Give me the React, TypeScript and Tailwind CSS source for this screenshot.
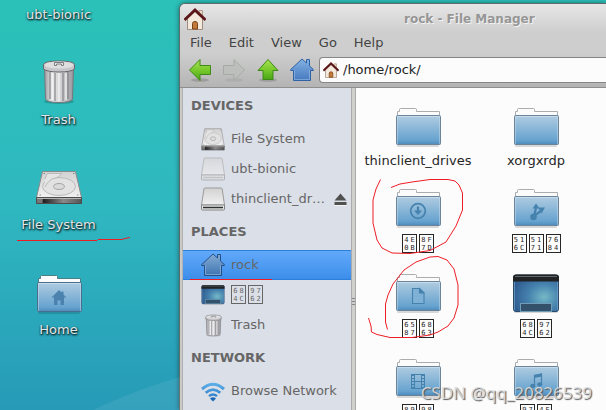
import type { ReactNode } from "react";

const SANS = "font-['DejaVu_Sans','Noto_Sans_CJK_SC',sans-serif]";

/* ---------- labels ---------- */

function HexGlyph({ code }: { code: string }) {
  return (
    <span className="flex h-[19px] w-[15px] flex-col items-center justify-center border border-current font-['DejaVu_Sans_Mono',monospace] text-[7px] leading-[8px]">
      <span className="flex gap-[2px]">
        <span>{code[0]}</span>
        <span>{code[1]}</span>
      </span>
      <span className="flex gap-[2px]">
        <span>{code[2]}</span>
        <span>{code[3]}</span>
      </span>
    </span>
  );
}

function HexLabel({ codes }: { codes: string[] }) {
  return (
    <span className="flex h-5 gap-[2px]">
      {codes.map((c) => (
        <HexGlyph key={c} code={c} />
      ))}
    </span>
  );
}

/* ---------- icons ---------- */

function Defs() {
  return (
    <svg className="absolute h-0 w-0" aria-hidden="true">
      <defs>
        <linearGradient id="folder" x1="0" y1="0" x2="0" y2="1">
          <stop offset="0" stopColor="#b0cce1" />
          <stop offset="0.85" stopColor="#67a3cf" />
          <stop offset="1" stopColor="#4d8abd" />
        </linearGradient>
        <linearGradient id="metal" x1="0" y1="0" x2="1" y2="0">
          <stop offset="0" stopColor="#9b9b9f" />
          <stop offset="0.25" stopColor="#e6e6e8" />
          <stop offset="0.6" stopColor="#cfcfd3" />
          <stop offset="1" stopColor="#96969c" />
        </linearGradient>
        <linearGradient id="disk" x1="0" y1="0" x2="0" y2="1">
          <stop offset="0" stopColor="#d2d2d2" />
          <stop offset="1" stopColor="#f0f0f0" />
        </linearGradient>
        <linearGradient id="dark" x1="0" y1="0" x2="1" y2="0">
          <stop offset="0" stopColor="#777" />
          <stop offset="0.13" stopColor="#777" />
          <stop offset="0.14" stopColor="#1c1c1c" />
          <stop offset="0.6" stopColor="#8a8a8a" />
          <stop offset="1" stopColor="#555" />
        </linearGradient>
        <linearGradient id="green" x1="0" y1="0" x2="0" y2="1">
          <stop offset="0" stopColor="#a9e253" />
          <stop offset="0.5" stopColor="#78c92c" />
          <stop offset="1" stopColor="#4aa518" />
        </linearGradient>
        <linearGradient id="blue" x1="0" y1="0" x2="0" y2="1">
          <stop offset="0" stopColor="#86b2e4" />
          <stop offset="1" stopColor="#4479be" />
        </linearGradient>
        <linearGradient id="steel" x1="0" y1="0" x2="0" y2="1">
          <stop offset="0" stopColor="#84acd4" />
          <stop offset="1" stopColor="#3f74b2" />
        </linearGradient>
        <radialGradient id="screen" cx="0.68" cy="0.6" r="0.7">
          <stop offset="0" stopColor="#74b9c6" />
          <stop offset="0.5" stopColor="#4682ae" />
          <stop offset="1" stopColor="#2f5d92" />
        </radialGradient>
        <linearGradient id="wifi" x1="0" y1="0" x2="0" y2="24" gradientUnits="userSpaceOnUse">
          <stop offset="0" stopColor="#6cc0f4" />
          <stop offset="1" stopColor="#1b68b8" />
        </linearGradient>
      </defs>
    </svg>
  );
}

function Folder({ emblem, low = false }: { emblem?: ReactNode; low?: boolean }) {
  return (
    <svg viewBox={low ? "0 -3 48 48" : "0 0 48 48"} className="size-12" aria-hidden="true">
      <rect x="3" y="41" width="42" height="2" rx="1" fill="#000" opacity="0.14" />
      <path
        d="M3.500 13V7.500H5.500V5.500Q5.500 4.500 6.500 4.500H21.500Q22.500 4.500 22.500 5.500V7.500H45.500V13Z"
        fill="#fbfbfb"
        stroke={low ? "#4a7f88" : "#aaacae"}
      />
      <rect x="2.500" y="11.500" width="44" height="29" rx="1" fill="url(#folder)" stroke={low ? "#48708c" : "#6c849a"} />
      <path d="M3.500 12.500H45.500" stroke="#e2eef7" opacity="0.5" />
      <path d="M3.500 13V40M45.500 13V40" stroke="#d4e6f4" opacity="0.4" />
      {emblem}
    </svg>
  );
}

const downloadEmblem = (
  <g fill="none" stroke="#4682ae" strokeWidth="1.700">
    <circle cx="24" cy="26" r="7.300" />
    <path d="M24 21.500V26.500" strokeWidth="2.200" />
    <path d="M20 25.500H28L24 30Z" fill="#4682ae" stroke="none" />
  </g>
);

const shareEmblem = (
  <g fill="#4682ae" stroke="#4682ae">
    <circle cx="21.500" cy="32" r="3.300" stroke="none" />
    <path d="M22 31L24 23M22.500 30.500L29 26" strokeWidth="2.200" />
    <path d="M20.500 23.500L24 18.500L27.500 23.500ZM26 22.500L33 22.500L29.500 28.500Z" stroke="none" />
  </g>
);

const documentEmblem = (
  <g fill="#7fb0d6" stroke="#4682ae" strokeWidth="1.100">
    <path d="M18.500 18.500H25.500L30 23V33.500H18.500Z" />
    <path d="M25.500 18.500V23H30Z" fill="#4682ae" />
  </g>
);

const videoEmblem = (
  <g fill="none" stroke="#4682ae">
    <rect x="17.500" y="19.500" width="13" height="14" />
    <path d="M20.500 19.500V33.500M27.500 19.500V33.500M20.500 26.500H27.500" />
    <path d="M19 20V33M29 20V33" strokeWidth="2" strokeDasharray="1 2" />
  </g>
);

const musicEmblem = (
  <g fill="#4682ae" stroke="#4682ae">
    <path d="M22.500 31V20.500L29.500 19V29.500" fill="none" strokeWidth="1.200" />
    <path d="M22 20L30 18.500V21.500L22 23Z" stroke="none" />
    <ellipse cx="20.700" cy="31" rx="2.200" ry="1.700" />
    <ellipse cx="27.700" cy="29.500" rx="2.200" ry="1.700" />
  </g>
);

const homeEmblem = (
  <path
    d="M24 19L16.500 26.500H19V34H22.500V29.500H25.500V34H29V26.500H31.500L28.500 23.500V20.500H26.500V21.500Z"
    fill="#4b82ae"
  />
);

function DesktopIcon({ className }: { className: string }) {
  return (
    <svg viewBox="0 0 48 40" className={className} aria-hidden="true">
      <rect x="2" y="36" width="44" height="3" rx="1.500" fill="#000" opacity="0.15" />
      <rect x="1.500" y="1" width="45" height="36.500" rx="2.500" fill="url(#screen)" stroke="#2c4a6c" />
      <path d="M1 7.500V3.500Q1 0.500 4 0.500H44Q47 0.500 47 3.500V7.500Z" fill="#202224" />
      <path d="M3 2.500H45" stroke="#64686c" />
      <path d="M2.500 8V36M45.500 8V36" stroke="#73a2c6" opacity="0.7" />
      <rect x="8.500" y="29.500" width="31" height="8" fill="#33516b" stroke="#6f9cb6" />
    </svg>
  );
}

function Trash({ className }: { className: string }) {
  return (
    <svg viewBox="0 0 34 46" className={className} aria-hidden="true">
      <ellipse cx="17" cy="42.500" rx="15" ry="2.500" fill="#000" opacity="0.18" />
      <path d="M2.500 8L3.500 40Q5 43.500 17 43.500Q29 43.500 30.500 40L31.500 8Z" fill="url(#metal)" stroke="#77777c" />
      <path d="M8 13V40M13 14V42M21 14V42M26 13V40" stroke="#77777c" strokeWidth="2" opacity="0.5" />
      <path d="M10.500 14V41M17 14V42.500M24 14V41" stroke="#f4f4f6" strokeWidth="1.600" opacity="0.8" />
      <path d="M1.500 6Q1.500 2 17 2Q32.500 2 32.500 6V10Q29 13 17 13Q5 13 1.500 10Z" fill="#c7c7cb" stroke="#67676b" />
      <ellipse cx="17" cy="6" rx="14.500" ry="3.500" fill="#dededf" />
      <path d="M12.500 6.500V3.500H21.500V6.500H19.500V5H14.500V6.500Z" fill="#ededed" stroke="#747478" strokeWidth="0.900" />
    </svg>
  );
}

function HardDisk({ className }: { className: string }) {
  return (
    <svg viewBox="0 0 48 36" preserveAspectRatio="none" className={className} aria-hidden="true">
      <path d="M7.500 2.500H40.500L46.500 28.500H1.500Z" fill="url(#disk)" stroke="#8a8a8a" />
      <path d="M1.500 28.500H46.500V34.500H1.500Z" fill="url(#dark)" stroke="#4c4c4c" />
      <path d="M2 29.500H46" stroke="#b5b5b5" />
      <ellipse cx="24" cy="17.500" rx="16.500" ry="9" fill="#e2e2e2" stroke="#bababa" />
      <path d="M10 10L12 4.500H27Q24 9 17 10Q12 13 10 18" fill="#e4e4e4" stroke="#bababa" />
      <ellipse cx="24" cy="17.500" rx="5.500" ry="3" fill="#dadada" stroke="#a4a4a4" />
      <path d="M8.500 4.500H10M38 4.500H39.500M4.500 26H6M42 26H43.500" stroke="#8a8a8a" />
    </svg>
  );
}

function Drive({ faded = false }: { faded?: boolean }) {
  return (
    <svg viewBox="0 0 24 24" className={faded ? "size-6 opacity-50" : "size-6"} aria-hidden="true">
      <path d="M3 1.500Q3 1 4 1H20Q21 1 21.200 2L23.500 18H0.500Z" fill="url(#disk)" stroke="#9b9b9b" />
      <path d="M0.500 18H23.500V22Q23.500 23 22.500 23H1.500Q0.500 23 0.500 22Z" fill="#e6e6e6" stroke="#858585" />
      <path d="M2 20.500H22" stroke={faded ? "#a5aaa8" : "#2d3230"} strokeWidth="1.500" />
    </svg>
  );
}

function Arrow({ turn, muted = false }: { turn: "left" | "right" | "up"; muted?: boolean }) {
  const d = {
    left: "M1.500 12L12 1.500V7.500H22.500V16.500H12V22.500Z",
    right: "M22.500 12L12 1.500V7.500H1.500V16.500H12V22.500Z",
    up: "M12 1.500L22 12.500H17V21.500H7V12.500H2Z",
  }[turn];
  return (
    <svg viewBox="0 0 24 24" className="size-6" aria-hidden="true">
      <ellipse cx="12" cy="22" rx="9" ry="1.800" fill="#000" opacity={muted ? "0.06" : "0.15"} />
      <path d={d} fill={muted ? "#bcbfbc" : "url(#green)"} stroke={muted ? "#a6aaa6" : "#3f8a17"} strokeLinejoin="round" />
    </svg>
  );
}

function BlueHouse({ steel = false }: { steel?: boolean }) {
  return (
    <svg viewBox="0 0 24 24" className="size-6" aria-hidden="true">
      <path
        d="M12 1L0.700 11.500V12.500H3.500V22.500H20.500V12.500H23.300V11.500L19.500 8V1.500H16.500V5Z"
        fill={steel ? "url(#steel)" : "url(#blue)"}
        stroke={steel ? "#24508a" : "#2e62a6"}
        strokeLinejoin="round"
      />
      <path d="M4.500 12.500V21.500H19.500V12.500" fill="none" stroke="#a9caee" opacity="0.5" />
    </svg>
  );
}

function RedHouse({ className }: { className: string }) {
  return (
    <svg viewBox="0 0 22 22" className={className} aria-hidden="true">
      <path d="M15 2.500H18.500V9H15Z" fill="#e9dccb" stroke="#b29a86" />
      <path d="M3.500 10.500L11 3.500L18.500 10.500V21.500H3.500Z" fill="#f3e9dc" stroke="#a08c7c" />
      <path d="M8.500 21V15.500Q8.500 13.500 11 13.500Q13.500 13.500 13.500 15.500V21Z" fill="#c27a3c" stroke="#7a4318" />
      <path d="M1.500 11L11 2L20.500 11" fill="none" stroke="#5c171a" strokeWidth="2.800" strokeLinecap="square" />
    </svg>
  );
}

function Wifi() {
  return (
    <svg viewBox="0 0 24 24" className="size-6" aria-hidden="true">
      <g fill="none" stroke="url(#wifi)" strokeLinecap="butt">
        <path d="M1 10Q12 0.500 23 10" strokeWidth="3" />
        <path d="M4.700 13.800Q12 7.500 19.300 13.800" strokeWidth="2.800" />
        <path d="M8 17.200Q12 13.700 16 17.200" strokeWidth="2.400" />
      </g>
      <path d="M9 19.500Q12 17 15 19.500L12 22.500Z" fill="#1b68b8" />
    </svg>
  );
}

function Eject() {
  return (
    <svg viewBox="0 0 13 13" className="size-[13px]" aria-hidden="true">
      <path d="M6.500 0.500L12.500 7.500H0.500Z" fill="#505050" />
      <path d="M0.500 9H12.500V12H0.500Z" fill="#505050" />
      <path d="M0.500 12.500H12.500" stroke="#f4f4f4" />
    </svg>
  );
}

/* ---------- desktop ---------- */

function WallpaperSweep() {
  return (
    <svg viewBox="0 0 90 34" className="absolute bottom-0 left-[90px] h-[34px] w-[90px]" aria-hidden="true">
      <path d="M3 34Q45 14 90 1V34Z" fill="#fff" opacity="0.07" />
    </svg>
  );
}

function DesktopItem({ icon, label }: { icon?: ReactNode; label: string }) {
  return (
    <button className="flex w-full flex-col items-center gap-[6px] text-[13px] leading-4 whitespace-nowrap text-[#e2e8e8] [text-shadow:1px_1px_2px_#0c2226,0_1px_2px_#0c2226]">
      {icon}
      <span>{label}</span>
    </button>
  );
}

function Desktop() {
  return (
    <section className="flex w-[117px] shrink-0 flex-col gap-[35px] pt-[7px]" aria-label="Desktop">
      <DesktopItem label="ubt-bionic" />
      <DesktopItem
        label="Trash"
        icon={
          <span className="flex size-12 items-center justify-center">
            <Trash className="h-[46px] w-[34px]" />
          </span>
        }
      />
      <DesktopItem
        label="File System"
        icon={
          <span className="flex size-12 items-center justify-center">
            <HardDisk className="h-9 w-12" />
          </span>
        }
      />
      <DesktopItem label="Home" icon={<Folder low emblem={homeEmblem} />} />
    </section>
  );
}

/* ---------- file manager ---------- */

function SideHeading({ children }: { children: ReactNode }) {
  return <h2 className="flex h-9 items-center pl-2 font-bold">{children}</h2>;
}

function SideItem({
  icon,
  children,
  selected = false,
  action,
}: {
  icon: ReactNode;
  children: ReactNode;
  selected?: boolean;
  action?: ReactNode;
}) {
  return (
    <div
      className={
        selected
          ? "flex h-[30px] items-center border-y border-[#2d7fdc] bg-linear-to-b from-[#61a9fa] to-[#3c8eea] pr-1 pl-[18px]"
          : "flex h-[30px] items-center pr-1 pl-[18px]"
      }
    >
      <button className="flex min-w-0 flex-1 items-center gap-[6px] text-left">
        <span className="flex size-6 shrink-0 items-center justify-center">{icon}</span>
        <span className="truncate">{children}</span>
      </button>
      {action}
    </div>
  );
}

function Sidebar() {
  return (
    <nav className="w-[168px] shrink-0 bg-[#dbdfe7] text-[13px] leading-4 text-[#666]" aria-label="Places">
      <SideHeading>DEVICES</SideHeading>
      <SideItem icon={<HardDisk className="size-6" />}>File System</SideItem>
      <SideItem icon={<Drive faded />}>ubt-bionic</SideItem>
      <SideItem
        icon={<Drive />}
        action={
          <button className="ml-2 shrink-0" aria-label="Eject">
            <Eject />
          </button>
        }
      >
        thinclient_drives
      </SideItem>
      <SideHeading>PLACES</SideHeading>
      <SideItem icon={<BlueHouse steel />} selected>
        rock
      </SideItem>
      <SideItem icon={<DesktopIcon className="h-5 w-6" />}>
        <HexLabel codes={["684C", "9762"]} />
      </SideItem>
      <SideItem icon={<Trash className="h-[23px] w-[17px]" />}>Trash</SideItem>
      <SideHeading>NETWORK</SideHeading>
      <SideItem icon={<Wifi />}>Browse Network</SideItem>
    </nav>
  );
}

function FileItem({ icon, children }: { icon: ReactNode; children: ReactNode }) {
  return (
    <button className="flex flex-col items-center gap-px self-start text-[13px] leading-4 whitespace-nowrap text-[#262626]">
      <span className="flex size-12 items-center justify-center">{icon}</span>
      {children}
    </button>
  );
}

function Files() {
  return (
    <main className="grid min-w-0 flex-1 grid-cols-[repeat(auto-fill,118px)] content-start gap-y-4 overflow-hidden bg-[#fcfcfc] pt-4 pl-[3px]">
      <FileItem icon={<Folder />}>
        <span>thinclient_drives</span>
      </FileItem>
      <FileItem icon={<Folder />}>
        <span>xorgxrdp</span>
      </FileItem>
      <FileItem icon={<Folder emblem={downloadEmblem} />}>
        <HexLabel codes={["4E0B", "8F7D"]} />
      </FileItem>
      <FileItem icon={<Folder emblem={shareEmblem} />}>
        <HexLabel codes={["516C", "5171", "7684"]} />
      </FileItem>
      <FileItem icon={<Folder emblem={documentEmblem} />}>
        <HexLabel codes={["6587", "6863"]} />
      </FileItem>
      <FileItem icon={<DesktopIcon className="h-10 w-12" />}>
        <HexLabel codes={["684C", "9762"]} />
      </FileItem>
      <FileItem icon={<Folder emblem={videoEmblem} />}>
        <HexLabel codes={["89C6", "9891"]} />
      </FileItem>
      <FileItem icon={<Folder emblem={musicEmblem} />}>
        <HexLabel codes={["97F3", "4E50"]} />
      </FileItem>
    </main>
  );
}

function ToolButton({ label, children }: { label: string; children: ReactNode }) {
  return (
    <button aria-label={label} className="flex w-[34px] shrink-0 items-center justify-center">
      {children}
    </button>
  );
}

function FileManager() {
  return (
    <section
      className="mt-[3px] ml-[62px] flex min-w-0 flex-1 flex-col overflow-hidden rounded-tl-md border-t border-l border-[#5d6a6a] bg-[#cecece] shadow-[0_0_5px_rgba(0,0,0,0.45)]"
      aria-label="File Manager"
    >
      <header className="flex h-[29px] shrink-0 items-center bg-linear-to-b from-[#e6e6e6] to-[#cecece] pl-1">
        <RedHouse className="size-[22px]" />
        <h1 className="ml-[198px] text-[12px] leading-4 font-bold whitespace-nowrap text-[#969696] [text-shadow:1px_1px_0_#f2f2f2]">
          rock - File Manager
        </h1>
      </header>
      <nav
        className="flex h-5 shrink-0 items-center gap-[17px] pl-[10px] text-[13px] leading-4 text-[#444]"
        aria-label="Menu"
      >
        <button>File</button>
        <button>Edit</button>
        <button>View</button>
        <button>Go</button>
        <button>Help</button>
      </nav>
      <div className="flex h-[35px] shrink-0 items-center border-b border-[#8e8e8e] bg-linear-to-b from-[#cecece] to-[#b4b4b4] pl-[3px]">
        <ToolButton label="Back">
          <Arrow turn="left" />
        </ToolButton>
        <ToolButton label="Forward">
          <Arrow turn="right" muted />
        </ToolButton>
        <ToolButton label="Up">
          <Arrow turn="up" />
        </ToolButton>
        <ToolButton label="Home">
          <BlueHouse />
        </ToolButton>
        <label className="flex h-[26px] min-w-0 flex-1 items-center gap-1 rounded-l-sm border border-r-0 border-[#868686] bg-[#fcfcfc] pl-[3px]">
          <RedHouse className="size-4 shrink-0" />
          <input
            aria-label="Location"
            defaultValue="/home/rock/"
            className="min-w-0 flex-1 bg-transparent text-[13px] leading-4 text-[#222] outline-none"
          />
        </label>
      </div>
      <div className="flex min-h-0 flex-1 border-l-2 border-[#c9c9c6]">
        <div className="flex min-w-0 flex-1 border-l border-[#b0b0b0]">
          <Sidebar />
          <div className="flex w-[5px] shrink-0 flex-col items-center justify-center border-x border-[#aaa] bg-[#cfcfcd] pt-[104px]">
            <span className="flex flex-col gap-[2px]">
              <span className="h-px w-[3px] bg-[#888]" />
              <span className="h-px w-[3px] bg-[#888]" />
              <span className="h-px w-[3px] bg-[#888]" />
            </span>
          </div>
          <Files />
        </div>
      </div>
    </section>
  );
}

/* ---------- overlays ---------- */

function PenMarks() {
  return (
    <svg
      viewBox="0 0 606 410"
      className="pointer-events-none absolute top-0 left-0 h-[410px] w-[606px]"
      fill="none"
      stroke="#ee1c25"
      aria-hidden="true"
    >
      <path d="M17 240.500H97L98 239.500H122L125 238.500L130 237.500" />
      <path d="M190 279.500H272" />
      <path d="M380.500 179.500L376 189L373 200V223L377 240L382 248L392 253L410 253.500L430 250.500L446 242L456 226L462.500 210V193L459 185L455 181L448 179.500H430L412 182L400 184L391 187.500" />
      <path d="M387.500 329.500L385.500 322V304L388 295L393 284L404 270L416 262L430 257L438 256.500L447 260L454 269L458 285V305L454 318L448 326L438 332L430 335L412 337.500H390L377 334.500L371.500 332L371 326L368.500 318" />
    </svg>
  );
}

export default function App() {
  return (
    <div
      className={`${SANS} relative flex h-screen overflow-hidden bg-linear-to-b from-[#2bc1b8] via-[#2fb8c0] to-[#279ab7]`}
    >
      <Defs />
      <WallpaperSweep />
      <Desktop />
      <FileManager />
      <PenMarks />
      <p className="pointer-events-none absolute right-[14px] bottom-[5px] font-['Noto_Sans',sans-serif] text-[17px] leading-6 whitespace-nowrap text-[#dcdcdc]/90 [text-shadow:1px_1px_1px_#555]">
        CSDN @qq_20826539
      </p>
    </div>
  );
}
